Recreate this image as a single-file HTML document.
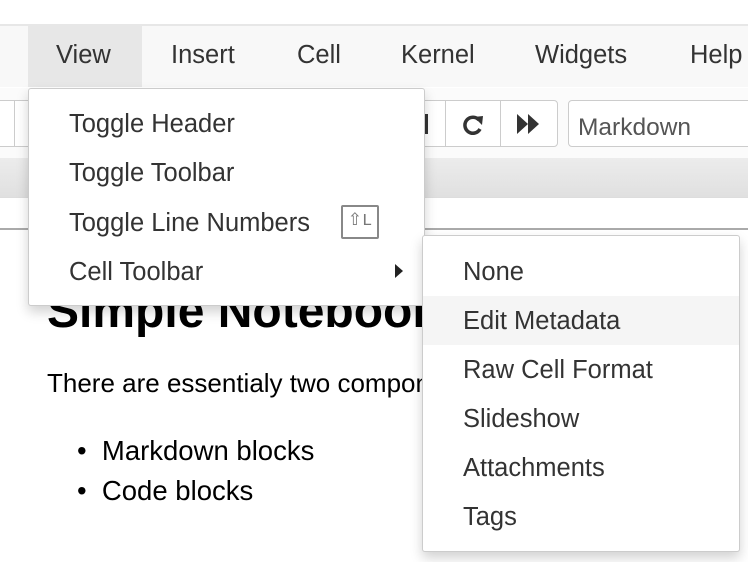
<!DOCTYPE html>
<html><head><meta charset="utf-8"><style>
*{margin:0;padding:0;box-sizing:border-box}
body{width:748px;height:562px;overflow:hidden;background:#fff;font-family:"Liberation Sans",Helvetica,Arial,sans-serif;position:relative;color:#000}
.abs{position:absolute}
.menubar{left:0;top:24px;width:748px;height:63px;background:#f8f8f8;border-top:2px solid #e7e7e7}
.mi{position:absolute;top:15px;font-size:25.5px;color:#333}
.view{left:28px;top:0;width:114px;height:61px;background:#e7e7e7}
.tb{top:100px;height:47px;border:1px solid #ccc;background:#fff}
.band{left:0;top:158px;width:748px;height:40px;background:linear-gradient(#ececec,#e0e0e0);border-bottom:1px solid #ddd}
.menu{background:#fff;border:1px solid rgba(0,0,0,.2);box-shadow:0 6px 12px rgba(0,0,0,.18);border-radius:3px}
.it{position:absolute;font-size:25.5px;color:#333;line-height:30px}
</style></head><body>
<div class="abs menubar">
 <div class="abs view"></div>
 <div class="mi" style="left:56px">View</div>
 <div class="mi" style="left:171px">Insert</div>
 <div class="mi" style="left:297px">Cell</div>
 <div class="mi" style="left:401px">Kernel</div>
 <div class="mi" style="left:535px">Widgets</div>
 <div class="mi" style="left:690px">Help</div>
</div>
<div class="abs" style="left:0;top:88px;width:748px;height:70px;background:#fbfbfb"></div>
<div class="abs tb" style="left:-5px;width:20px"></div>
<div class="abs tb" style="left:14px;width:20px"></div>
<div class="abs tb" style="left:400px;width:46px;border-radius:0"></div>
<div class="abs" style="left:420px;top:114px;width:8px;height:20px;background:#333"></div>
<div class="abs tb" style="left:445px;width:56px"></div>
<svg class="abs" style="left:460px;top:112px" width="26" height="26" viewBox="0 0 26 26"><path d="M19 8A8 8 0 1 0 20 17" fill="none" stroke="#333" stroke-width="3.5"/><path d="M14 5L23 4L22 13Z" fill="#333"/></svg>
<div class="abs tb" style="left:500px;width:58px;border-radius:0 4px 4px 0"></div>
<svg class="abs" style="left:516px;top:113px" width="26" height="22" viewBox="0 0 26 22"><path d="M1 1L12 11L1 21ZM12 1L23 11L12 21Z" fill="#333"/></svg>
<div class="abs tb" style="left:568px;width:190px;border-radius:4px"></div>
<div class="abs" style="left:578px;top:114px;font-size:24.5px;color:#555">Markdown</div>
<div class="abs band"></div>
<div class="abs" style="left:0;top:228px;width:748px;height:2px;background:#aaa"></div>
<div class="abs" style="left:47px;top:284px;font-size:48px;font-weight:bold">Simple Notebook</div>
<div class="abs" style="left:47px;top:368px;font-size:26px">There are essentialy two components of a notebook</div>
<div class="abs" style="left:77px;top:431px;font-size:27.5px;line-height:40px">•&nbsp;&nbsp;Markdown blocks<br>•&nbsp;&nbsp;Code blocks</div>

<div class="abs menu" style="left:28px;top:88px;width:397px;height:218px;border-top-color:#ccc">
 <div class="it" style="left:40px;top:20px">Toggle Header</div>
 <div class="it" style="left:40px;top:69px">Toggle Toolbar</div>
 <div class="it" style="left:40px;top:119px">Toggle Line Numbers</div>
 <div class="abs" style="left:312px;top:116px;width:38px;height:34px;border:2px solid #888;border-radius:2px;font-family:'Liberation Mono',monospace;font-size:17px;color:#777;text-align:center;line-height:30px">⇧L</div>
 <div class="it" style="left:40px;top:168px">Cell Toolbar</div>
 <svg class="abs" style="left:365px;top:174px" width="10" height="16"><path d="M1 1L9 8L1 15Z" fill="#222"/></svg>
</div>
<div class="abs menu" style="left:422px;top:235px;width:318px;height:317px">
 <div class="abs" style="left:0;top:60px;width:316px;height:49px;background:#f5f5f5"></div>
 <div class="it" style="left:40px;top:21px">None</div>
 <div class="it" style="left:40px;top:70px">Edit Metadata</div>
 <div class="it" style="left:40px;top:119px">Raw Cell Format</div>
 <div class="it" style="left:40px;top:168px">Slideshow</div>
 <div class="it" style="left:40px;top:217px">Attachments</div>
 <div class="it" style="left:40px;top:266px">Tags</div>
</div>
</body></html>
